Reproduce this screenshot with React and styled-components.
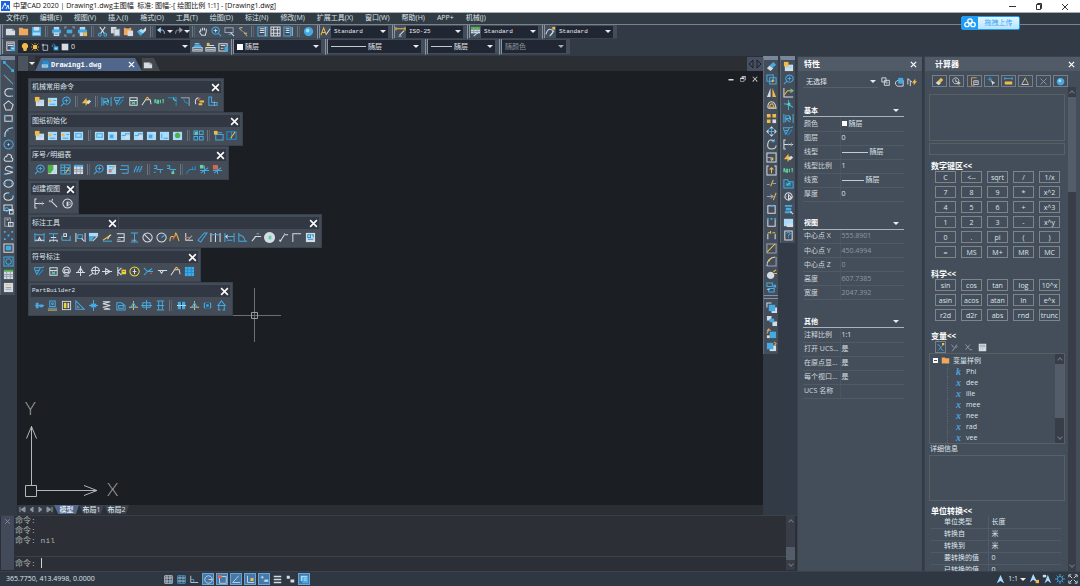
import React from 'react';
import styled, { createGlobalStyle, css } from 'styled-components';

const Global = createGlobalStyle`
  *, *::before, *::after { box-sizing: border-box; }
  body { margin: 0; background: #323a45; overflow: hidden; }
  body, button, input, select, textarea, table {
    font-family: 'Open Sans', 'Noto Sans', 'Noto Sans CJK SC', sans-serif;
    font-size: 7px;
    line-height: 10px;
    color: #dfe4ea;
  }
  button, input, select, textarea { margin: 0; padding: 0; border: 0; background: none; outline: none; }
`;

/* ---------- glyphs: "colour[*] path" entries separated by ";" , * means filled ---------- */
const inks = {
  b: '#45a9e2', w: '#d6dce3', y: '#f2bb45', g: '#5fd3a4', l: '#a9dbfb', r: '#e2634b',
  o: '#f0a85c', n: '#98a2af', k: '#2b333d', d: '#1f8fd0', e: '#e8d92e', m: '#4fb04a',
};

const glyphs = {
  fileNew: 'w* M1 3h7l3 2v5H1z;n M8 3v2h3',
  folder: 'o* M1 2h4l1 1h5v7H1z',
  save: 'b* M1 1h10v10H1z;w* M3 1h6v4H3z;l* M2 7h8v3H2z',
  print: 'b* M1 4h10v4H1z;l* M3 1h6v3H3z;w* M3 7h6v4H3z;b M4 9h4',
  preview: 'n M1 3V1h2M9 1h2v2M11 9v2H9M3 11H1V9;b* M3 4h6v4H3z',
  plot: 'b* M1 4h10v4H1z;l* M3 1h6v3H3z;w* M3 7h4v4H3z;y* M7 7h4v4H7z',
  cut: 'w M3 1l5 7M9 1L4 8;b M3 8a1.500 1.500 0 1 0 .1 0zM9 8a1.500 1.500 0 1 0 .1 0z',
  copy: 'w* M1 1h6v7H1z;n M4.500 3.500h6v7h-6z;w* M5 4h5v6H5z',
  paste: 'o* M1 2h8v8H1z;w* M5 5h6v6H5z;k M3 2h4',
  brush: 'w* M7 5l4-4v4L8 8z;b* M1 6l3-2 4 4-3 3z;l* M3 5l3-2 3 3-2 2z',
  undo: 'l M2 4h5q3 0 3 5;l* M0 4l5-4v8z',
  redo: 'n M10 4H5Q2 4 2 9;n* M12 4L7 0v8z',
  hand: 'w M3 6V3M5 5V2M7 5V2M9 6V3M3 6q-2-1-1 1l2 3h4l1-4',
  zoomRt: 'b M5 1a4 4 0 1 0 .1 0zM8 8l3 3;l M5 3v4M3 5h4',
  zoomWin: 'n M1 2h9v5H1z;w M7 7l4 4;b M5 9h3',
  zoomPrev: 'n M2 2l4 4M7 6l4 5;y M3 2h3M8 8h3',
  props: 'b M1 1h10v10H1z;w M3 3h5M3 5h5M3 7h5;w M9 1v10',
  table: 'w M1 1h10v10H1zM1 4h10M1 8h10M4 1v10M8 1v10',
  palette: 'b M1 1h7v10H1z;w M3 3h4M3 5h4M3 7h4;l M10 1v10',
  ball: 'b* M6 1a5 5 0 1 0 .1 0z;l* M5 3a2 2 0 1 0 .1 0z',
  textStyle: 'y M1 10L4 2l3 8M2 7h4;w M7 9l4-6',
  dimStyle: 'y M1 3h10M1 1v4M11 1v4;w M5 10l5-5;l M4 11h3',
  tableStyle: 'm* M1 1h10v3H1z;w* M1 4h10v4H1z;n M4 2v6M8 2v6M1 6h10;l M4 11l5-4',
  leaderStyle: 'w M1 9q2-7 6-5t-2 7;y* M8 1h3v3H8z;l M6 10l4-5',
  layers: 'w M2 1h8v9H2zM3 3h6M3 5h6;b* M6 6h5v5H6z;w M7 8h3',
  layerA: 'w M1 7h10v4H1zM2 9h8;b* M3 4h6l2 3H1z;l M3 3h5',
  layerB: 'w M1 7h10v4H1zM2 5h8M2 9h8;y* M2 2h3v3H2z',
  layerC: 'w M1 3h9v8H1zM3 5h5M3 8h3;b* M7 6h4v5H7z',
  bulb: 'y* M6 0a4.500 4.500 0 0 1 3 8l-1 4H4L3 8a4.500 4.500 0 0 1 3-8z',
  sun: 'y* M3 3h6v6H3z;y M1 1l2 2M11 1L9 3M1 11l2-2M11 11L9 9M6 0v2M6 10v2M0 6h2M10 6h2',
  frame: 'w M3 3h7v8H3zM1 3h3M3 1v3',
  unlock: 'b M2 6V3q2-3 4 0v2;b* M4 5h7v6H4z;l* M6 7h3v2H6z',
  swatch: 'w* M1 1h10v10H1z',
  dwg: 'd* M2 1h7l2 3v7H2z;w* M1 6h8v4H1z;d M2 8h6',
  line: 'b* M0 0h3v3H0zM9 9h3v3H9z;b M2 2l8 8',
  xline: 'b M1 1l2 2M9 9l2 2;n M3 3l6 6',
  pline: 'w M10 2H5Q2 3 2 6t3 4h4;b* M9 1h2v2H9zM9 9h2v2H9z',
  polygon: 'w M6 1l5 4-2 6H3L1 5z',
  rect: 'w M2 3h8v6H2z;b* M1 2h2v2H1zM9 8h2v2H9z',
  arc: 'w M2 11Q2 3 10 2;b* M9 1h2v2H9zM1 10h2v2H1zM4 4h2v2H4z',
  circle: 'b M6 1a5 5 0 1 0 .1 0z;w M6 5v2M5 6h2',
  cloud: 'w M3 10Q0 9 2 6q1-2 2-1 1-4 4-2 2 1 1 3 3 1 1 4z',
  spline: 'w M10 3Q5 0 3 3t5 4-6 3;b* M9 2h2v2H9zM1 9h2v2H1z',
  ellipse: 'w M6 2a5 4 0 1 0 .1 0z;b* M5 1h2v2H5zM1 5h2v2H1zM9 5h2v2H9z',
  ellArc: 'w M6 2Q1 2 1 6t5 4 5-4;b* M5 1h2v2H5zM10 5h2v2h-2z',
  insert: 'w M1 1h9v6H1z;b M4 4a2 2 0 1 0 .1 0z;w M7 6h4v5H7z',
  block: 'n M2 1h6v9H2z;w M6 6h5v4H6zM4 3h2',
  points: 'b* M1 1h2v2H1zM9 1h2v2H9zM5 5h2v2H5zM1 9h2v2H1zM9 9h2v2H9z',
  hatch: 'w M1 1h10v9H1z;b* M3 3h6v5H3z',
  region: 'b M1 1h10v10H1z;b M6 3a3 3 0 1 0 .1 0z',
  tbl: 'w* M1 1h10v10H1z;m* M1 1h10v2H1z;n M1 6h10M1 8h10M4 3v8M8 3v8',
  mtext: 'w* M1 1h10v10H1z;y M3 3h3M7 3h2;n M3 6h6M3 8h6',
  eraser: 'w* M1 8l3-3 4 3-3 3z;b* M4 5l4-4 3 3-4 4z',
  clear: 'w* M1 8l3-3 4 3-3 3z;y* M4 5l4-4 3 3-4 4z',
  copyObj: 'b M1 1h7v7H1zM4 4h7v7H4z;y M7 6v3M6 7.500h3',
  mirror: 'w* M5 1v10H1z;y* M7 1v10h4z',
  offset: 'w M2 8q0-6 4-6t5 7H3z;y M4 8q0-4 3-4l2 4z',
  array: 'y* M1 1h4v4H1zM7 1h4v4H7zM1 7h4v4H1z;w* M7 7h4v4H7z',
  move: 'b M6 1v10M1 6h10;w M4 3l2-2 2 2M4 9l2 2 2-2M3 4L1 6l2 2M9 4l2 2-2 2',
  rotate: 'w M9 2Q3-1 2 5t4 6 5-4;b M9 0v3H6',
  scale: 'w M1 1h10v10H1z;y* M5 6h3v3H5z;n M1 6h5v5',
  stretch: 'w M3 1H1v10h10V1H9;y M6 9V3M4 5l2-2 2 2',
  trim: 'y M5 9l3-7;n M1 7h3M7 6h4',
  extend: 'y M8 10l3-8;n M1 6h6M5 4l3 2-3 2',
  breakPt: 'w M2 2h8v8H2z;b* M5 1h3v2H5z',
  breakTwo: 'w M2 3v7h8V3;b* M1 1h2v2H1zM5 1h2v2H5zM9 1h2v2H9z',
  join: 'w M2 10V4M10 10V4;y M2 3h3M7 3h3M5 1v3',
  chamfer: 'n M1 1h10v10H1z;y M1 10l9-9',
  fillet: 'n M1 11h10V1;w M1 11q0-9 9-10;y M3 6q1-3 4-4',
  explode: 'w* M5 3a4 4 0 1 0 .1 0z;y M8 3l3-2M9 5h3',
  blockEd: 'b M1 1h6v4H1zM3 7h6v4H3z;b* M8 3h3v3H8z;l M1 8h3',
  front: 'w* M6 6h6v6H6z;b* M3 3h7v7H3z;w M1 6V1h5',
  back: 'w* M1 1h5v5H1zM7 7h5v5H7z;b* M4 4h5v4H4z',
  above: 'b* M4 4h7v7H4z;w* M1 8h3v3H1z;o M1 6l2-4M1 3l2-2 2 2',
  under: 'w* M4 5h7v6H4z;b* M1 2h7v7H1z;o M9 1l2 2-2 2',
  imgNew: 'w* M2 4h9v7H2z;l* M3 5h7v3H3z;y* M1 1h5v5H1z',
  imgSun: 'l* M1 2h10v9H1z;y* M2 4h3v3H2z;b M3 9h6M7 5h3',
  magnify: 'b M7 1a4 4 0 1 0 .1 0zM4 8l-3 3M5 5h4M7 3v4',
  axis: 'w M1 1v10h10;y M1 9l4-5h5;g M8 2l3 2-3 2',
  cross: 'b M6 0v11M1 4q5 0 10 4;g* M5 3h3v3H5z',
  dimR: 'b M1 1v10M11 1v10M3 10V3h4v3H3l5 4;g M8 4v4',
  surf: 'b M0 2l3 7 4-7 4-1M0 2h8M2 5h4;d M5 10l5-6',
  brk: 'w M3 1H1v10h2M1 6h10;n M6 5v2M9 4v4',
  flash: 'y* M1 8l5-6v3h4L5 11V8z;w* M6 7l3-3 2 2-3 3z',
  rtext: 'g M1 8V4h1v2l1 2M4 4v4h1V4M7 4v4M9 4h2M10 4v4',
  folderB: 'b M1 2h4l1 2h5v7H1z;d* M3 5h6v4H3z;g M4 8l4-3',
  vise: 'w M6 2a4 4 0 1 0 .1 0zM6 4v5l3-2z;n M1 6h3',
  barrel: 'b* M2 1h8v2H2zM3 4h6v3H3zM2 8h8v2H2z;w M8 8l3 3',
  pic: 'l* M1 2h10v8H1z;w* M4 7h7v4H4z',
  help: 'w M2 1h8v10H2z;b M4 4q2-3 4 0L6 6v1M6 8v1',
  box4: 'w M2 2h8v8H2zM2 5h8;g M4 6l4 3M8 6l-4 3',
  weld: 'w M1 10l4-6h5l1 5;y M5 4q2-5 4 0',
  corner: 'd M1 2h9v9;g M7 2q0 3 3 3',
  cornerB: 'n M1 2h9v9;d M4 2q0 6 6 6',
  noteArc: 'w M2 9Q0 3 5 2;r M4 5l3-3;y* M6 5h5v2H6zM5 8h4v2H5z',
  ell: 'b M2 1v9h9V7H5V1z;n M8 6v5',
  sheet: 'l* M1 2h10v9H1z;b M3 4h6v4H3z',
  sheetB: 'l* M1 2h10v9H1z;b* M3 5h4v4H3z;w M7 3h3v3',
  sheetC: 'l* M1 2h10v9H1z;b M2 6h4V4h5;w* M6 6h4v4H6z',
  sheetD: 'l* M1 2h10v9H1z;b M3 4v5M5 9h5',
  sheetOk: 'l* M1 2h10v9H1z;m* M6 3a3 3 0 1 0 .1 0z',
  grid4: 'b M1 1h4v4H1zM7 1h4v4H7zM1 7h4v4H1zM7 7h4v4H7z;g* M2 2h3v3H2z',
  layerY: 'b M3 5h8v6H3zM4 3h6;y* M1 1h4v4H1z',
  bookY: 'd M1 2h5v8H1zM6 2h5v8H6z;y M5 9l5-7',
  green: 'w* M1 1h10v10H1z;m* M1 1h6v5l-3 4H1z;l* M7 6h3v4H7z',
  tableB: 'b M1 1h10v10H1zM1 4h10M1 7h10M5 1v10;y M6 10l4-6',
  sheetGrid: 'w* M1 1h10v10H1z;b* M1 1h10v2H1z;n M1 6h10M1 8h10M4 3v8M8 3v8',
  sheetEd: 'l* M1 1h10v10H1z;b M3 3h6M3 6h4;o M5 8l5-6;r* M3 7h3v2H3z',
  rows: 'b M2 2h8v8M1 6h8M3 10h7',
  hatchB: 'b M1 9l3-7M4 9l3-7M7 9l3-7;d M1 6h3M7 6h3',
  wire: 'b M1 2h3v3H1M4 6h7M8 6v4M1 9h2',
  wireG: 'b M1 2h3v3H1M4 6h7M8 6v4;g* M6 8h3v3H6z',
  scatter: 'd M1 9l3-3h3V3M7 6h3V2M1 11v-2',
  star: 'b M6 2v9M1 7h10M2 10l8-6;g* M1 1h4v4H1z',
  starR: 'b M6 2v9M1 7h10M2 10l8-6;r* M1 1h5v5H1z',
  arrow: 'w M10 10L4 4M1 3l3 1 1-3;n M1 4h3',
  ringP: 'w M6 1a5 5 0 1 0 .1 0z;w* M5 4h2v5H5z;n M7 4l3 2-3 2',
  dimH: 'b M1 1v10M11 1v10M1 3h10;w M4 10l2-4 2 4M1 9h10',
  dimV: 'b M1 2h10M6 2v9;w M3 6h6M2 11V9h8v2',
  dimL: 'b M1 9V4M10 9V4M1 9h10;w M3 2h3v3H3z',
  dimFit: 'w M1 1v10M11 1v10;b M3 3h5v4H3z;w M7 7l3 3',
  panel: 'l* M1 1h10v4H1z;b* M1 5h6l-3 5H1z;w M5 10l5-5',
  angleY: 'y M1 9l9-6;b M1 10h10;w M6 8l3-5',
  stack: 'w M2 2h8v8H2M3 6h7;n M2 8h4',
  dimI: 'b M2 1h8M2 11h8M6 1v10;n M3 9h5',
  circSl: 'w M6 1a5 5 0 1 0 .1 0zM2 2l8 8',
  circR: 'w M6 1a5 5 0 1 0 .1 0z;b M6 6l4-3',
  wave: 'y M1 10Q1 4 4 5t3-3 4 8;r M4 8l3-4',
  ordL: 'w M3 1v8h8;r M2 6h6;n M5 9l5-5',
  para: 'b M1 9l7-8h3L4 11z',
  pipes: 'w M1 1v10M6 1v10M11 1v10;b M1 3h10',
  dimB: 'b M1 1v10M11 1v10M1 5h10M3 9h6;w M4 3l-2 2 2 2',
  angle: 'b M2 1v9h9M2 3q6 1 7 7',
  leader: 'w M1 10l4-5h6M4 5h4;n M6 2h3',
  disc: 'w* M6 0a6 6 0 1 0 .1 0z;g* M5 4h3v4H5z',
  leadB: 'w M2 11L7 3h4M1 9h3;n M7 1v3',
  leadC: 'w M2 11V2h9',
  ab: 'w* M1 1h10v10H1z;d M3 3h3v3H3zM7 3h2v3M3 8h6',
  balloon: 'w M6 1a4 4 0 1 0 .1 0zM4 4h4v3H4zM3 11h6',
  tri: 'w M6 0v11M1 7h10M6 2L3 7h6z',
  axisC: 'w M7 1a4 4 0 1 0 .1 0zM7 0v9M2 5h10M4 8l-4 3',
  tap: 'w M0 6h11M4 3l5 3-5 3z',
  kbox: 'w M2 1v10M6 2L2 6l4 4;e* M6 4h5v5H6z;r M7 6h3',
  slot: 'e M6 1a5 5 0 1 0 .1 0z;w M6 3v6M4 6h4',
  xcut: 'b M1 2l4 4 5-3M1 10l4-4h6;r M8 8h2',
  level: 'w M1 5h10M3 5l2 3 2-3',
  gridB: 'b* M1 1h10v10H1z;d M1 4h10M1 7h10M4 1v10M8 1v10',
  bolt: 'b M1 6h10;b* M2 3h3v6H2zM6 5h4v3H6z',
  stamp: 'b M3 1h6v6H3zM1 9h10;y M1 11h10;b M6 3a1 1 0 1 0 .1 0z',
  book: 'w* M1 1h10v10H1z;k* M2 2h8v8H2z;e* M3 3h3v6H3z;w* M7 3h2v6H7z',
  triL: 'b M2 1v9h9z;n M4 6v2h2',
  pin: 'b* M3 4h6v4H3z;b M6 0v12M1 6h10',
  spring: 'w M2 2h8L2 4l8 2-8 2 8 2H3',
  hatchR: 'b M2 3h5l4 3v5H2zM4 6h5v3H4z',
  cone: 'y M6 1v10M1 8h10;b M6 3L3 8h6z',
  gear: 'b M2 3h8v5H2zM0 6h12M6 0v11',
  beam: 'b M2 1h8M2 11h8M4 1v10M8 1v10M2 6h8',
  globe: 'b* M2 2h8v8H2z;k M6 2v8;l M1 6h10',
  shaft: 'b* M2 3h8v6H2z;k M4 4h4v4H4z',
  crane: 'b M6 1L2 6h8zM3 6v5M9 6v5M2 11h3M7 11h3',
  gridS: 'w M1 1h10v10H1zM1 4h10M1 8h10M4 1v10M8 1v10;b* M8 8h3v3H8z',
  snapG: 'b M1 1h10v10H1zM4 1v10M8 1v10;w M1 4h10M1 8h10',
  ortho: 'w M1 1v9h10;b M1 6h4v4',
  polar: 'w M6 1a5 5 0 1 0 .1 0zM6 6h5',
  osnap: 'w M2 2h9v9H2z;r* M0 0h5v4H0z',
  track: 'w M1 10h10M1 10l8-9',
  dyn: 'w M2 1v9h9;y* M6 4h4v4H6z',
  dynIn: 'w M1 3h4M3 1v4M5 8h6;l* M6 6h5v3H6z',
  lwt: 'w* M1 1h10v2H1zM1 5h10v2H1zM1 9h10v2H1z',
  cyc: 'w M3 2l2 2;w* M1 1h4v4H1zM6 6h5v4H6z',
  model: 'l* M1 1h9v7H1z;b* M3 3h8v8H3z;w M5 5h4M5 7h4',
  anno: 'l* M6 0l5 11-5-3-5 3z',
  annoY: 'l* M5 0l5 10-5-3-4 3z;y* M8 7h4v4H8z',
  annoA: 'l* M7 1l4 10-4-3-4 3z;w* M1 1h4v3H1z',
  cog: 'b M6 3a3 3 0 1 0 .1 0zM6 0v3M6 9v3M0 6h3M9 6h3M2 2l2 2M8 8l2 2M10 2L8 4M4 8l-2 2',
  full: 'w M1 4V1h3M8 1h3v3M11 8v3H8M4 11H1V8M2 2l3 3M10 2L7 5M10 10L7 7M2 10l3-3',
  selA: 'w M1 1h5v5H1zM4 4h6v6H4z;n M7 5v4M5 7h4',
  selB: 'w M2 9Q1 5 5 4h6v7H4z;b* M5 1h6v7H5z',
  selC: 'w M1 2l5 4M1 2v7M4 5v6;y* M6 7l4-5v3h2L8 10V7z',
  history: 'w M5 1a4 4 0 1 0 .1 0zM5 3v3h2;y M7 9l3 2;w* M7 7h4v2H7z',
  pasteC: 'o M2 1h7M2 1v10h4;w M5 5h6v5H5zM6 7h4',
  pick: 'b M1 3h6M4 0v6;w* M5 4l6 4-3 1v3z',
  ruler: 'b M1 2h10M1 0v4M11 0v4;y* M1 6h10v4H1z',
  angC: 'w M6 1L1 10h9;y M6 2l4 8',
  crossX: 'n M2 2l8 8M10 2l-8 8',
  varX: 'b M2 2q3 0 4 4t4 4M9 3L3 10;y* M8 0h3v3H8z',
  varE: 'n M2 2l3 4M9 2L3 11M7 7l3-3',
  varD: 'n M2 2l6 7M8 2L2 9M8 9h3',
  calc: 'w* M1 1h10v10H1z;n M3 3h6v2H3zM3 8h1M6 8h1',
  min: 'w* M1 6h10v3H1z',
  rest: 'w M1 4h7v7H1zM4 4V1h7v7H8;w* M1 4h7v2H1zM4 1h7v2H4z',
  shut: 'w* M2 1l4 4 4-4 1 1-4 4 4 4-1 2-4-5-4 5-1-2 4-4-4-4z',
};

function Glyph({ name, size = 11 }) {
  return (
    <svg width={size} height={size} viewBox="0 0 12 12" aria-hidden="true">
      {glyphs[name].split(';').map((part, i) => {
        const fill = part[1] === '*';
        const d = part.slice(fill ? 3 : 2);
        const ink = inks[part[0]];
        return <path key={i} d={d} fill={fill ? ink : 'none'} stroke={fill ? 'none' : ink} strokeWidth="1.1" />;
      })}
    </svg>
  );
}

const Tool = styled.button`
  display: grid;
  place-items: center;
  flex: none;
  width: ${(p) => p.$w || 11}px;
  height: ${(p) => p.$h || 12}px;
  svg { display: block; }
  ${(p) => p.$on && css`background: #4478a8; box-shadow: inset 0 0 0 1px #6aa3d4;`}
  ${(p) => p.$boxed && css`border: 1px solid #77808a;`}
`;

const Sep = styled.span`
  flex: none;
  width: 3px;
  height: 11px;
  margin: 0 1px;
  border-left: 1px solid #6b7787;
  border-right: 1px solid #59636f;
`;

const Caret = styled.span`
  flex: none;
  border: 3px solid transparent;
  border-top-color: ${(p) => p.$c || '#e8ecf0'};
  border-bottom: 0;
`;

const tools = (list, props) =>
  list.split(' ').map((n, i) =>
    n === '|' ? <Sep key={i} /> : <Tool key={i} aria-label={n} {...props}><Glyph name={n} size={props?.size} /></Tool>
  );

/* ---------- frame ---------- */
const Shell = styled.div`
  position: relative;
  display: flex;
  flex-direction: column;
  height: 100vh;
  background: #323a45;
`;

const TitleBar = styled.header`
  display: flex;
  align-items: center;
  gap: 3px;
  flex: none;
  height: 13px;
  padding: 0 10px 0 1px;
  background: #fff;
  border-bottom: 1px solid #a8adb2;
  h1 { flex: 1; margin: 0; font-size: 7px; font-weight: 400; color: #111; white-space: pre; }
`;

const WinButton = styled.button`
  width: 11px;
  height: 11px;
  margin-left: 12px;
  svg { display: block; fill: none; stroke: #333; }
`;

const MenuBar = styled.nav`
  display: flex;
  gap: 12px;
  flex: none;
  height: 12px;
  padding: 0 6px;
  background: #303b43;
  border-bottom: 1px solid #79828e;
  a { color: #dfe4ea; text-decoration: none; white-space: nowrap; }
`;

const Badge = styled.button`
  position: absolute;
  top: 16px;
  right: 60px;
  display: flex;
  width: 59px;
  height: 14px;
  border-radius: 2px;
  overflow: hidden;
  background: linear-gradient(#e4f5ff, #b9e4ff);
  border: 1px solid #1f9cf5;
  span { flex: 1; color: #3ba6f0; line-height: 12px; }
  svg { background: #1f9cf5; }
`;

const ToolRow = styled.div`
  display: flex;
  align-items: stretch;
  flex: none;
  height: ${(p) => p.$h}px;
`;

const ToolGroup = styled.div`
  display: flex;
  align-items: center;
  gap: ${(p) => (p.$tight ? 0 : 2)}px;
  width: ${(p) => (p.$w ? `${p.$w}px` : 'auto')};
  padding: ${(p) => (p.$tight ? '0 4px 0 0' : '0 2px')};
  background: #444e5b;
  border-left: 3px double #8793a3;
  border-bottom: 1px solid #3a434f;
`;

const History = styled.div`
  display: flex;
  align-items: center;
  justify-content: space-between;
  flex: none;
  width: 33px;
  height: 12px;
  background: #232833;
`;

const Field = styled.label`
  display: flex;
  align-items: center;
  gap: 2px;
  flex: 1;
  min-width: 0;
  height: ${(p) => p.$h || 12}px;
  padding: 0 2px 0 3px;
  background: ${(p) => (p.$plain ? 'transparent' : '#202632')};
  ${(p) => p.$plain && css`border-bottom: 1px solid #56606c;`}
  select {
    appearance: none;
    flex: 1;
    min-width: 0;
    font-family: ${(p) => (p.$mono ? "'Liberation Mono'" : "'Open Sans'")}, 'Noto Sans CJK SC', sans-serif;
    font-size: ${(p) => (p.$mono ? 6 : 7)}px;
    color: ${(p) => (p.$dim ? '#8b949f' : '#e4e8ec')};
    line-height: 11px;
  }
`;

const Rule = styled.span`
  flex: none;
  width: ${(p) => p.$w}px;
  height: 1px;
  background: #c5cbd2;
`;

const Square = styled.span`
  flex: none;
  width: ${(p) => p.$s || 6}px;
  height: ${(p) => p.$s || 6}px;
  background: #fff;
`;

function Pick({ label, value, children, ...rest }) {
  return (
    <Field {...rest}>
      {children}
      <select aria-label={label} defaultValue={value}><option>{value}</option></select>
      <Caret $c={rest.$dim ? '#a4abb3' : undefined} />
    </Field>
  );
}

/* ---------- workspace ---------- */
const Main = styled.main`
  display: grid;
  grid-template-columns: minmax(0, 1fr) 125px 158px;
  flex: 1;
  min-height: 0;
  padding-top: 1px;
`;

const Workspace = styled.section`
  display: flex;
  flex-direction: column;
  min-width: 0;
  min-height: 0;
`;

const Desk = styled.div`
  display: flex;
  flex: 1;
  min-height: 0;
`;

const Rail = styled.div`
  display: flex;
  flex-direction: column;
  align-items: center;
  align-self: flex-start;
  gap: 1px;
  width: 15px;
  margin-right: 2px;
  padding-bottom: 2px;
  background: #444e5b;
  border-top: 4px solid #78879a;
  border-left: 1px solid #5b6878;
`;

const RailBreak = styled.hr`
  width: 100%;
  height: 4px;
  margin: 1px 0;
  border: solid #8391a3;
  border-width: 1px 0;
`;

const Doc = styled.div`
  display: flex;
  flex-direction: column;
  flex: 1;
  min-width: 0;
`;

const TabStrip = styled.div`
  display: flex;
  align-items: flex-end;
  flex: none;
  height: 15px;
  padding-left: 1px;
  background: #2b2e33;
`;

const Block = styled.span`
  display: grid;
  place-items: center;
  width: ${(p) => p.$w}px;
  height: 15px;
  background: ${(p) => p.$bg};
`;

const FileTab = styled.div`
  display: flex;
  align-items: center;
  gap: 1px;
  width: 107px;
  height: 13px;
  padding: 0 7px 0 6px;
  background: #50668a;
  clip-path: polygon(6px 0, 100px 0, 107px 100%, 0 100%);
  b { flex: 1; font-family: 'Liberation Mono', monospace; color: #fff; }
`;

const NewTab = styled.button`
  width: 18px;
  height: 13px;
  padding: 1px 4px 0 1px;
  background: #44474c;
  clip-path: polygon(0 0, 12px 0, 18px 100%, 0 100%);
  svg { display: block; }
`;

const TabNav = styled.div`
  display: flex;
  margin-left: auto;
  button { width: 8px; height: 14px; background: #465062; }
  svg { display: block; }
`;

const Canvas = styled.div`
  position: relative;
  flex: 1;
  min-height: 0;
  padding: 7px 0 0 11px;
  background: #1b1e22;
  overflow: hidden;
`;

const MdiButtons = styled.div`
  position: absolute;
  top: 3px;
  right: 4px;
  display: flex;
  gap: 3px;
`;

const Palettes = styled.div`
  position: relative;
  display: flex;
  flex-direction: column;
  align-items: flex-start;
`;

const PaletteBox = styled.section`
  width: ${(p) => p.$w}px;
  height: 34px;
  padding: 2px;
  background: #444c57;
  border: 1px solid #38414c;
`;

const PaletteHeads = styled.div`
  display: flex;
  gap: 1px;
  background: #444c57;
`;

const PaletteHead = styled.div`
  display: flex;
  align-items: center;
  justify-content: space-between;
  flex: ${(p) => (p.$w ? `0 0 ${p.$w}px` : 1)};
  height: 12px;
  padding: 0 1px;
  background: #313844;
  h2 { margin: 0; font-size: ${(p) => (p.$latin ? 6 : 7)}px; font-weight: 400; white-space: nowrap;
    font-family: 'Liberation Mono', 'Noto Sans CJK SC', monospace; }
`;

const PaletteBody = styled.div`
  display: flex;
  align-items: center;
  justify-content: space-between;
  height: 16px;
  padding: 0 3px;
`;

const palettes = [
  { t: '机械常用命令', w: 196, i: 'imgNew imgSun magnify | flash | dimR surf box4 weld rtext corner cornerB noteArc ell' },
  { t: '图纸初始化', w: 215, i: 'imgNew imgSun imgSun sheet | sheet sheetB sheetC sheetC sheetB sheetD sheetOk | grid4 | layerY bookY' },
  { t: '序号/明细表', w: 201, i: 'magnify green tableB sheetGrid | magnify sheetEd rows hatchB | wire wireG | scatter star starR' },
  { t: '创建视图', w: 51, i: 'brk arrow ringP' },
  { t: '标注工具', w: 294, split: 87, i: 'dimH dimV dimL dimFit panel angleY stack dimI circSl circR wave ordL para pipes dimB angle leader disc leadB leadC ab' },
  { t: '符号标注', w: 173, i: 'surf box4 balloon tri axisC tap kbox slot xcut level weld gridB' },
  { t: 'PartBuilder2', latin: true, w: 205, i: 'bolt stamp book triL pin spring hatchR cone gear beam | globe cone shaft crane' },
];

const Cursor = styled.svg`
  position: absolute;
  left: 210px;
  top: 217px;
`;

const Ucs = styled.svg`
  position: absolute;
  left: 5px;
  bottom: 5px;
  text { font-family: Lato, sans-serif; font-weight: 300; font-size: 18px; fill: #a4a7aa; }
`;

const LayoutTabs = styled.div`
  display: flex;
  flex: none;
  height: 10px;
  padding-left: 1px;
  background: #2b2e33;
`;

const NavArrow = styled.button`
  width: 9px;
  height: 9px;
  background: #343b45;
  svg { display: block; }
`;

const LayoutTab = styled.button`
  width: 25px;
  height: 9px;
  line-height: 9px;
  font-weight: ${(p) => (p.$on ? 700 : 500)};
  background: ${(p) => (p.$on ? '#50668a' : '#3b424d')};
  clip-path: polygon(0 0, 100% 0, 22px 100%, 4px 100%);
`;

const Command = styled.section`
  display: flex;
  flex: none;
  height: 56px;
  padding: 0 2px 1px 1px;
  background: #2c3036;
  border-top: 1px solid #3a4048;
`;

const CommandGrip = styled.div`
  flex: none;
  width: 13px;
  margin-right: 1px;
  background: #434b5b;
`;

const CommandText = styled.div`
  display: flex;
  flex-direction: column;
  flex: 1;
  min-width: 0;
  font-family: 'Liberation Mono', 'Noto Sans CJK SC', monospace;
  font-size: 8px;
  color: #aab0b7;
  pre { flex: 1; margin: 0; font: inherit; }
  label { display: flex; gap: 5px; border-top: 1px solid #3d434b; line-height: 13px; }
  input { flex: 1; border-left: 1px solid #cfd3d8; height: 10px; margin-top: 1px; }
`;

const Scroll = styled.div`
  display: flex;
  flex-direction: column;
  align-items: center;
  flex: none;
  width: ${(p) => p.$w || 9}px;
  background: #393d47;
  &::before, &::after {
    content: '';
    width: 4px;
    height: 4px;
    margin: 4px 0 2px;
    border: solid #6d7681;
    border-width: 1px 0 0 1px;
    transform: rotate(45deg);
  }
  &::after { margin: 2px 0 4px; border-width: 0 1px 1px 0; }
`;

const Thumb = styled.span`
  width: 100%;
  flex: 0 0 ${(p) => p.$size}px;
  margin-top: ${(p) => (p.$end ? 'auto' : 0)};
  margin-bottom: ${(p) => (p.$end ? 0 : 'auto')};
  background: #535d69;
`;

/* ---------- docked panels ---------- */
const Panel = styled.aside`
  display: flex;
  flex-direction: column;
  min-height: 0;
  margin-left: ${(p) => p.$ml || 0}px;
  background: #434e5a;
  border-left: 1px solid #39424d;
  overflow: hidden;
`;

const PanelHead = styled.div`
  display: flex;
  align-items: center;
  justify-content: space-between;
  flex: none;
  height: 15px;
  padding: 0 5px 0 ${(p) => p.$pl}px;
  background: #505b67;
  border-top: 1px solid #39424d;
  h2 { margin: 0; font-size: 8px; color: #fff; }
`;

const PropTop = styled.div`
  display: flex;
  align-items: center;
  gap: 2px;
  height: 14px;
  margin: 4px 5px 16px 5px;
`;

const PropGroup = styled.section`
  margin: 0 18px 16px 5px;
  h3 {
    display: flex;
    align-items: center;
    justify-content: space-between;
    height: 12px;
    margin: 0;
    padding: 0 5px 0 1px;
    font-size: 7px;
    color: #fff;
    border-bottom: 1px solid #aab2bb;
  }
  table { width: 100%; border-collapse: collapse; table-layout: fixed; }
  th, td { height: 14px; padding: 0 0 0 1px; text-align: left; font-weight: 400; white-space: nowrap;
    border-bottom: 1px solid #4f5a66; }
  th { width: 37px; border-right: 1px solid #4b5662; color: #d3d9df; }
  td { padding-left: 1px; color: ${(p) => (p.$dim ? '#8f98a2' : '#dfe4ea')}; }
  td span { display: inline-block; margin-right: 2px; vertical-align: middle; }
`;

const groups = [
  ['基本', [['颜色', '随层', 'sq'], ['图层', '0'], ['线型', '随层', 26], ['线型比例', '1'], ['线宽', '随层', 22], ['厚度', '0']]],
  ['视图', [['中心点 X', '555.8901'], ['中心点 Y', '450.4994'], ['中心点 Z', '0'], ['高度', '607.7385'], ['宽度', '2047.392']], true],
  ['其他', [['注释比例', '1:1'], ['打开 UCS...', '是'], ['在原点显...', '是'], ['每个视口...', '是'], ['UCS 名称', '']]],
];

const CalcBody = styled.div`
  display: flex;
  flex: 1;
  min-height: 0;
  padding-right: 4px;
`;

const CalcMain = styled.div`
  flex: 1;
  min-width: 0;
  padding: 7px 3px 0 4px;
  overflow: hidden;
  h3 { margin: 0 0 0 2px; height: 10px; font-size: 8px; line-height: 10px; color: #fff; }
`;

const CalcTools = styled.div`
  display: flex;
  justify-content: space-between;
  flex: none;
  padding: 4px 12px 0 7px;
`;

const Output = styled.textarea`
  display: block;
  width: 100%;
  height: ${(p) => p.$h}px;
  margin-bottom: ${(p) => p.$mb}px;
  border: 1px solid #596064;
  resize: none;
`;

const Expr = styled.input`
  display: block;
  width: 100%;
  height: 12px;
  margin-bottom: 6px;
  border: 1px solid #596064;
`;

const Keys = styled.div`
  display: grid;
  grid-template-columns: repeat(5, 1fr);
  gap: 3px 5px;
  margin: 0 5px ${(p) => p.$mb}px 6px;
  button { height: 12px; border: 1px solid #7c848c; line-height: 9px; white-space: nowrap; }
`;

const VarTools = styled.div`
  display: flex;
  gap: 3px;
  margin-left: 6px;
`;

const Tree = styled.div`
  display: flex;
  height: 91px;
  border: 1px solid #596064;
  overflow: hidden;
  ul { flex: 1; margin: 0; padding: 1px 0 0 3px; list-style: none; }
  li { display: flex; align-items: center; gap: 3px; height: 11px; line-height: 11px; }
  li + li { margin-left: 14px; padding-left: 8px; border-left: 1px dotted #5d6772; }
  i { width: 7px; font: italic 700 10px/10px 'Liberation Serif', serif; color: #4da3e0; }
`;

const Collapse = styled.span`
  width: 5px;
  height: 5px;
  background: linear-gradient(#434e5a, #434e5a) center / 3px 1px no-repeat #fff;
`;

const Caption = styled.label`
  display: block;
  height: 11px;
  padding-left: 1px;
`;

const Units = styled.table`
  width: 130px;
  margin-left: 2px;
  border-collapse: collapse;
  th, td { height: 12px; padding: 0 0 0 3px; text-align: left; font-weight: 400; border-bottom: 1px solid #515b67; white-space: nowrap; }
  th { width: 57px; padding-left: 13px; border-right: 1px solid #515b67; }
`;

/* ---------- status bar ---------- */
const Status = styled.footer`
  display: flex;
  align-items: center;
  gap: 2px;
  flex: none;
  height: 15px;
  padding: 0 2px 0 6px;
  background: #2e3742;
  border-top: 1px solid #39424d;
  output { width: 155px; }
`;

const Spacer = styled.span`
  flex: 1;
`;

const left = 'line xline pline polygon rect arc circle cloud spline ellipse ellArc insert block points hatch region tbl mtext';
const modify = 'eraser copyObj mirror offset array move rotate scale stretch trim extend breakPt breakTwo join chamfer fillet explode blockEd';
const mech = 'imgNew magnify axis cross dimR surf brk flash rtext folderB vise barrel pic help';
const menus = ['文件(F)', '编辑(E)', '视图(V)', '插入(I)', '格式(O)', '工具(T)', '绘图(D)', '标注(N)', '修改(M)', '扩展工具(X)', '窗口(W)', '帮助(H)', 'APP+', '机械(J)'];
const numKeys = ['C', '<--', 'sqrt', '/', '1/x', '7', '8', '9', '*', 'x^2', '4', '5', '6', '+', 'x^3', '1', '2', '3', '-', 'x^y', '0', '.', 'pi', '(', ')', '=', 'MS', 'M+', 'MR', 'MC'];
const sciKeys = ['sin', 'cos', 'tan', 'log', '10^x', 'asin', 'acos', 'atan', 'ln', 'e^x', 'r2d', 'd2r', 'abs', 'rnd', 'trunc'];

const CloseButton = ({ size = 8, label = '关闭' }) => (
  <Tool $w={size} $h={10} aria-label={label}>
    <svg width={size} height={size} viewBox="0 0 8 8"><path d="M1 1l6 6M7 1L1 7" stroke="#fff" strokeWidth="1.4" /></svg>
  </Tool>
);

export default function App() {
  return (
    <Shell>
      <Global />
      <TitleBar>
        <svg width="9" height="10" viewBox="0 0 9 10"><path d="M0 0h9v10H0z" fill="#1b62e0" /><path d="M1 8l3-6 1 3M5 8l2-4 1 4" fill="none" stroke="#fff" /></svg>
        <h1>{'中望CAD 2020 | Drawing1.dwg主图幅  标准: 图幅:-[ 绘图比例 1:1] - [Drawing1.dwg]'}</h1>
        <WinButton aria-label="最小化"><svg width="11" height="11"><path d="M2 5.500h7" /></svg></WinButton>
        <WinButton aria-label="还原"><svg width="11" height="11"><path d="M3.500 3.500h4v5h-4zM4.500 3V2.500h4v5H8" /></svg></WinButton>
        <WinButton aria-label="关闭"><svg width="11" height="11"><path d="M3 3l6 6M9 3L3 9" /></svg></WinButton>
      </TitleBar>
      <MenuBar>{menus.map((m) => <a key={m} href="#menu">{m}</a>)}</MenuBar>
      <Badge>
        <svg width="16" height="12" viewBox="0 0 16 12"><g fill="none" stroke="#fff" strokeWidth="1.300"><circle cx="8" cy="4" r="2.200" /><circle cx="5" cy="7.500" r="2.200" /><circle cx="11" cy="7.500" r="2.200" /></g></svg>
        <span>拖拽上传</span>
      </Badge>

      <ToolRow $h={14}>
        <ToolGroup $w={317}>
          {tools('fileNew folder save | print preview plot | cut copy paste brush |')}
          <History>
            <Tool aria-label="放弃"><Glyph name="undo" size={9} /></Tool><Caret />
            <Tool aria-label="重做"><Glyph name="redo" size={9} /></Tool><Caret />
          </History>
          {tools('| hand zoomRt zoomWin zoomPrev | props table palette | ball')}
        </ToolGroup>
        {[['textStyle', 'Standard', '文字样式'], ['dimStyle', 'ISO-25', '标注样式'], ['tableStyle', 'Standard', '表格样式'], ['leaderStyle', 'Standard', '引线样式']].map(([g, v, l]) => (
          <ToolGroup key={g} $w={75} $tight>
            {tools(g)}
            <Pick label={l} value={v} $mono />
          </ToolGroup>
        ))}
      </ToolRow>
      <ToolRow $h={16}>
        <ToolGroup $w={231}>
          {tools('layers')}
          <Field $h={13}>
            {['bulb', 'sun', 'frame', 'unlock', 'swatch'].map((g) => <Glyph key={g} name={g} size={8} />)}
            <select aria-label="图层" defaultValue="0"><option>0</option></select>
            <Caret />
          </Field>
          {tools('layerA layerB layerC')}
        </ToolGroup>
        <ToolGroup $w={94} $tight><Pick label="颜色" value="随层" $h={13}><Square /></Pick></ToolGroup>
        <ToolGroup $w={100} $tight><Pick label="线型" value="随层" $h={13}><Rule $w={35} /></Pick></ToolGroup>
        <ToolGroup $w={74} $tight><Pick label="线宽" value="随层" $h={13}><Rule $w={21} /></Pick></ToolGroup>
        <ToolGroup $w={71} $tight><Pick label="打印样式" value="随颜色" $h={13} $dim /></ToolGroup>
      </ToolRow>

      <Main>
        <Workspace>
          <Desk>
            <Rail>{tools(left)}</Rail>
            <Doc>
              <TabStrip>
                <Block $w={10} $bg="#4a535e" />
                <Block $w={7} $bg="#363b42"><Caret /></Block>
                <FileTab><Glyph name="dwg" size={9} /><b>Drawing1.dwg</b><CloseButton size={7} /></FileTab>
                <NewTab aria-label="新建"><Glyph name="fileNew" size={10} /></NewTab>
                <TabNav>
                  <button aria-label="上一个"><svg width="8" height="14"><path d="M6 3v8L2 7z" fill="none" stroke="#1a1d22" /></svg></button>
                  <button aria-label="下一个"><svg width="8" height="14"><path d="M2 3v8l4-4z" fill="none" stroke="#1a1d22" /></svg></button>
                </TabNav>
              </TabStrip>
              <Canvas>
                <Cursor width="54" height="54" stroke="#6c6f72" fill="none">
                  <path d="M0 27.500h54M27.500 0v54" />
                  <path d="M24.500 24.500h6v6h-6z" stroke="#9a9da0" />
                </Cursor>
                <Ucs width="100" height="108" viewBox="0 -8 100 108" fill="none" stroke="#b4b7ba">
                  <path d="M3.500 85.500h11v11h-11zM9.500 85V26M4.500 38.500l5-12 5 12M15 90.500h59M62 85.500l13 5-13 5" />
                  <text x="3" y="15" stroke="none">Y</text>
                  <text x="85" y="96" stroke="none">X</text>
                </Ucs>
                <MdiButtons>
                  {['min', 'rest', 'shut'].map((n) => <Tool key={n} $w={9} $h={10} aria-label={n}><Glyph name={n} size={6} /></Tool>)}
                </MdiButtons>
                <Palettes>
                  {palettes.map((p) => (
                    <PaletteBox key={p.t} $w={p.w}>
                      <PaletteHeads>
                        <PaletteHead $w={p.split} $latin={p.latin}><h2>{p.t}</h2><CloseButton size={9} /></PaletteHead>
                        {p.split && <PaletteHead><span /><CloseButton size={9} /></PaletteHead>}
                      </PaletteHeads>
                      <PaletteBody>{tools(p.i)}</PaletteBody>
                    </PaletteBox>
                  ))}
                </Palettes>
              </Canvas>
              <LayoutTabs>
                {['M2 2v5M7 2v5L3 4.500z', 'M6 2v5L3 4.500z', 'M3 2v5l3-2.500z', 'M7 2v5M2 2v5l4-2.500z'].map((d) => (
                  <NavArrow key={d} aria-label="切换布局"><svg width="9" height="9"><path d={d} fill="#8d96a1" stroke="#8d96a1" strokeWidth="1" /></svg></NavArrow>
                ))}
                <LayoutTab $on>模型</LayoutTab>
                <LayoutTab>布局1</LayoutTab>
                <LayoutTab>布局2</LayoutTab>
              </LayoutTabs>
            </Doc>
            <Rail>
              {tools(modify)}
              <RailBreak />
              {tools('front back above under')}
            </Rail>
            <Rail>{tools(mech)}</Rail>
          </Desk>
          <Command>
            <CommandGrip><Tool $w={13} $h={10} aria-label="关闭命令行"><Glyph name="crossX" size={7} /></Tool></CommandGrip>
            <CommandText>
              <pre>{'命令:\n命令:\n命令: nil'}</pre>
              <label>命令:<input aria-label="命令" /></label>
            </CommandText>
            <Scroll $w={9}><Thumb $size={13} $end /></Scroll>
          </Command>
        </Workspace>

        <Panel>
          <PanelHead $pl={6}><h2>特性</h2><CloseButton size={7} /></PanelHead>
          <PropTop>
            <Pick label="选择" value="无选择" $plain />
            {tools('selA selB selC', { size: 10 })}
          </PropTop>
          {groups.map(([title, rows, dim]) => (
            <PropGroup key={title} $dim={dim}>
              <h3>{title}<Caret /></h3>
              <table>
                <tbody>
                  {rows.map(([k, v, mark]) => (
                    <tr key={k}>
                      <th scope="row">{k}</th>
                      <td>{mark === 'sq' ? <Square $s={5} /> : mark && <Rule $w={mark} />}{v}</td>
                    </tr>
                  ))}
                </tbody>
              </table>
            </PropGroup>
          ))}
        </Panel>

        <Panel $ml={2}>
          <PanelHead $pl={10}><h2>计算器</h2><CloseButton size={7} /></PanelHead>
          <CalcTools>{tools('clear history pasteC pick ruler angC crossX ball', { $boxed: true, $w: 15, $h: 12, size: 9 })}</CalcTools>
          <CalcBody>
            <CalcMain>
              <Output $h={47} $mb={2} aria-label="历史记录" readOnly />
              <Expr aria-label="表达式" />
              <h3>数字键区&lt;&lt;</h3>
              <Keys $mb={11}>{numKeys.map((k) => <button key={k}>{k}</button>)}</Keys>
              <h3>科学&lt;&lt;</h3>
              <Keys $mb={10}>{sciKeys.map((k) => <button key={k}>{k}</button>)}</Keys>
              <h3>变量&lt;&lt;</h3>
              <VarTools>{tools('varX', { $boxed: true, size: 9 })}{tools('varE varD calc', { size: 9 })}</VarTools>
              <Tree>
                <ul>
                  <li><Collapse /><Glyph name="folder" size={9} />变量样例</li>
                  {['Phi', 'dee', 'ille', 'mee', 'nee', 'rad', 'vee'].map((v) => (
                    <li key={v}><i>{v === 'Phi' ? 'k' : 'x'}</i>{v}</li>
                  ))}
                </ul>
                <Scroll $w={9}><Thumb $size={54} /></Scroll>
              </Tree>
              <Caption htmlFor="detail">详细信息</Caption>
              <Output id="detail" $h={46} $mb={5} readOnly />
              <h3>单位转换&lt;&lt;</h3>
              <Units>
                <tbody>
                  {[['单位类型', '长度'], ['转换自', '米'], ['转换到', '米'], ['要转换的值', '0'], ['已转换的值', '0']].map(([k, v]) => (
                    <tr key={k}><th scope="row">{k}</th><td>{v}</td></tr>
                  ))}
                </tbody>
              </Units>
            </CalcMain>
            <Scroll $w={8}><Thumb $size={95} /></Scroll>
          </CalcBody>
        </Panel>
      </Main>

      <Status>
        <output>365.7750, 413.4998, 0.0000</output>
        {tools('gridS snapG ortho', { size: 9 })}
        {tools('polar osnap track dyn dynIn', { $on: true, $w: 12, size: 9 })}
        {tools('lwt cyc', { size: 9 })}
        {tools('model', { $on: true, $w: 12, size: 9 })}
        <Spacer />
        {tools('anno', { size: 9 })}
        <span>1:1</span><Caret />
        {tools('annoY annoA cog full', { size: 10 })}
      </Status>
    </Shell>
  );
}
